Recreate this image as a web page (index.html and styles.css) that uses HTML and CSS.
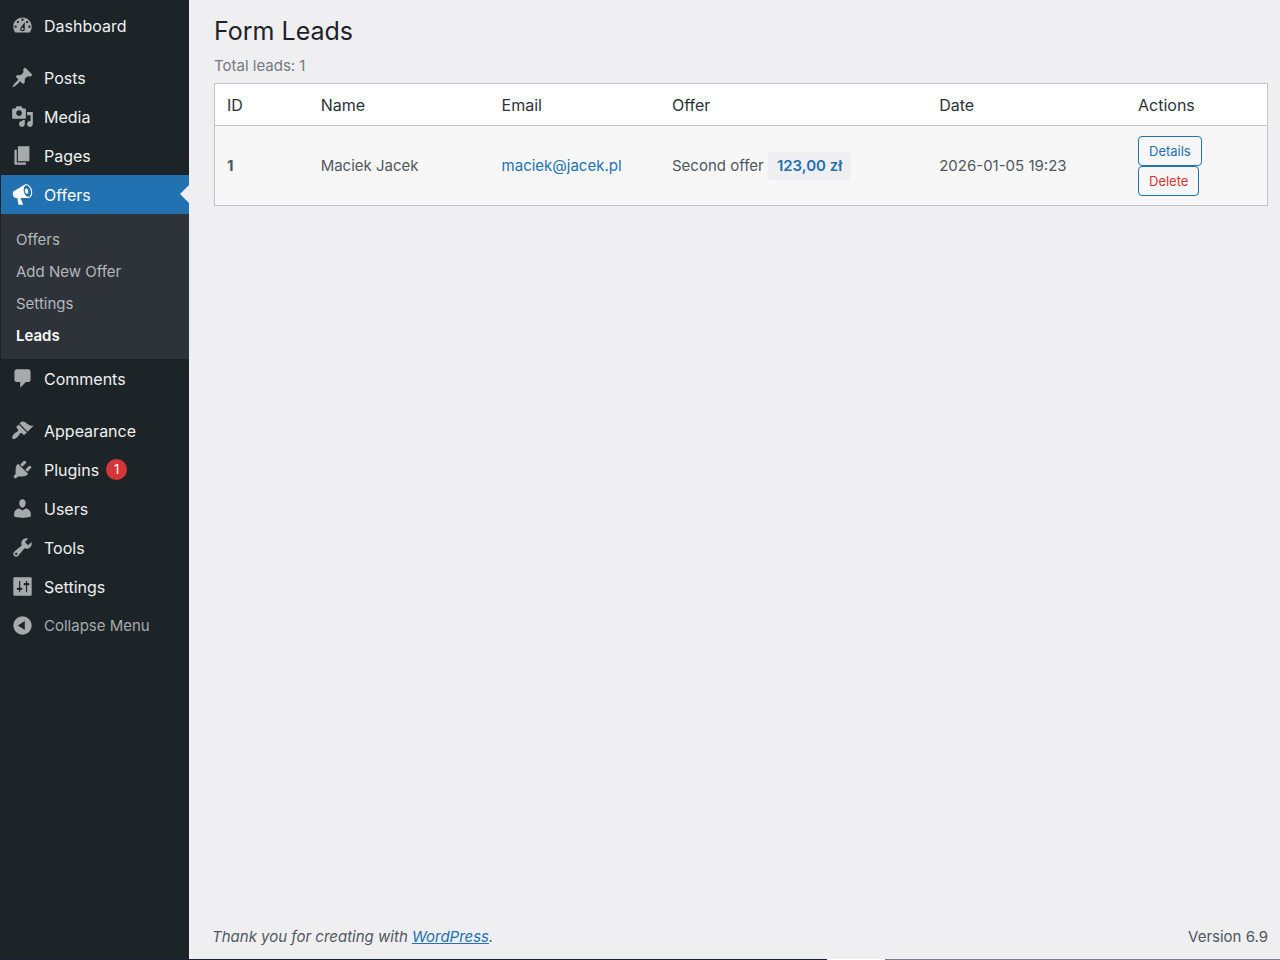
FILE: index.html
```html
<!DOCTYPE html>
<html lang="en">
<head>
    <meta charset="UTF-8">
    <meta name="viewport" content="width=device-width, initial-scale=1.0">
    <title>Form Leads</title>
    <link rel="stylesheet" href="styles.css">
</head>
<body>

    <div class="layout">
        <!-- Admin menu -->
        <nav class="sidebar" aria-label="Main menu">
            <ul class="menu">
                <li><a href="#"><svg class="icon" viewBox="0 0 20 20"><path fill-rule="evenodd" d="M3.76 16h12.48c1.1-1.37 1.76-3.11 1.76-5 0-4.42-3.58-8-8-8s-8 3.58-8 8c0 1.89.66 3.63 1.76 5zM10 4c.55 0 1 .45 1 1s-.45 1-1 1-1-.45-1-1 .45-1 1-1zM6 6c.55 0 1 .45 1 1s-.45 1-1 1-1-.45-1-1 .45-1 1-1zm8 0c.55 0 1 .45 1 1s-.45 1-1 1-1-.45-1-1 .45-1 1-1zm-5.37 5.55L12 7v6c0 1.1-.9 2-2 2s-2-.9-2-2c0-.57.24-1.08.63-1.45zM4 10c.55 0 1 .45 1 1s-.45 1-1 1-1-.45-1-1 .45-1 1-1zm12 0c.55 0 1 .45 1 1s-.45 1-1 1-1-.45-1-1 .45-1 1-1zm-5 3c0-.55-.45-1-1-1s-1 .45-1 1 .45 1 1 1 1-.45 1-1z"/></svg>Dashboard</a></li>
                <li class="group"><a href="#"><svg class="icon" viewBox="0 0 20 20"><path d="M10.44 3.02l1.82-1.82 6.36 6.35-1.83 1.82c-1.05-.68-2.48-.57-3.41.36l-.75.75c-.92.93-1.04 2.35-.35 3.41l-1.83 1.82-2.41-2.41-2.8 2.79c-.42.42-3.38 2.71-3.8 2.29s1.86-3.39 2.28-3.81l2.79-2.79L4.1 9.36l1.83-1.82c1.05.69 2.48.57 3.4-.36l.75-.75c.93-.92 1.05-2.35.36-3.41z"/></svg>Posts</a></li>
                <li><a href="#"><svg class="icon" viewBox="0 0 20 20"><path fill-rule="evenodd" d="M13 11V4c0-.55-.45-1-1-1h-1.67L9 1H5L3.67 3H2c-.55 0-1 .45-1 1v7c0 .55.45 1 1 1h10c.55 0 1-.45 1-1zM7 4.5c1.38 0 2.5 1.12 2.5 2.5S8.38 9.5 7 9.5 4.5 8.38 4.5 7 5.62 4.5 7 4.5zM14 6h5v10.5c0 1.38-1.12 2.5-2.5 2.5S14 17.88 14 16.5s1.12-2.5 2.5-2.5c.17 0 .34.02.5.05V9h-3V6zm-4 8.05V13h2v3.5c0 1.38-1.12 2.5-2.5 2.5S7 17.88 7 16.5 8.12 14 9.5 14c.17 0 .34.02.5.05z"/></svg>Media</a></li>
                <li><a href="#"><svg class="icon" viewBox="0 0 20 20"><path d="M6 15V2h10v13H6zm-1 1h8v2H3V5h2v11z"/></svg>Pages</a></li>
                <li>
                    <a href="#" class="active"><svg class="icon" viewBox="0 0 20 20"><path fill-rule="evenodd" d="M18.15 5.94c.46 1.62.38 3.22-.02 4.48-.42 1.28-1.26 2.18-2.3 2.48-.16.06-.26.06-.4.06-.06.02-.12.02-.18.02-.06.02-.14.02-.22.02h-6.8l2.22 5.5c.02.14-.06.26-.14.34-.08.1-.24.16-.34.16H6.95c-.1 0-.26-.06-.34-.16-.08-.08-.16-.2-.14-.34l-1-5.5H4.25l-.02-.02c-.5.06-1.08-.18-1.54-.62s-.88-1.08-1.06-1.88c-.24-.8-.2-1.56-.02-2.2.18-.62.58-1.08 1.06-1.3l.02-.02 9-5.4c.1-.06.18-.1.24-.16.06-.04.14-.08.24-.12.16-.08.28-.12.5-.18 1.04-.3 2.24.1 3.22.98s1.84 2.24 2.26 3.86zm-2.58 5.98h-.02c.4-.1.74-.34 1.04-.7.58-.7.86-1.76.86-3.04 0-.64-.1-1.3-.28-1.98-.34-1.36-1.02-2.5-1.78-3.24s-1.68-1.1-2.46-.88c-.82.22-1.4.96-1.7 2-.32 1.04-.28 2.36.06 3.72.38 1.36 1 2.5 1.8 3.24.78.74 1.62 1.1 2.48.88zm-2.54-7.08c.22-.04.42-.02.62.04.38.16.76.48 1.02 1s.42 1.2.42 1.78c0 .3-.04.56-.12.8-.18.48-.44.84-.86.94-.34.1-.8-.06-1.14-.4s-.64-.86-.78-1.5c-.18-.62-.12-1.24.02-1.72s.48-.84.82-.94z"/></svg>Offers</a>
                    <ul class="submenu">
                        <li><a href="#">Offers</a></li>
                        <li><a href="#">Add New Offer</a></li>
                        <li><a href="#">Settings</a></li>
                        <li><a href="#" class="current">Leads</a></li>
                    </ul>
                </li>
                <li><a href="#"><svg class="icon" viewBox="0 0 20 20"><path d="M5 2h10c1.1 0 2 .9 2 2v7c0 1.100-.9 2-2 2h-2l-5 5v-5H5c-1.100 0-2-.9-2-2V4c0-1.100.9-2 2-2z"/></svg>Comments</a></li>
                <li class="group"><a href="#"><svg class="icon" viewBox="0 0 20 20"><path d="M14.48 11.06L7.41 3.99l1.5-1.5c.5-.56 2.3-.47 3.51.32 1.21.8 1.43 1.28 2.91 2.1 1.18.64 2.45 1.26 4.45.85zm-.71.71L6.7 4.7 4.93 6.47c-.39.39-.39 1.02 0 1.41l1.06 1.06c.39.39.39 1.03 0 1.42-.6.6-1.43 1.11-2.21 1.69-.35.26-.7.53-1.01.84C1.43 14.23.4 16.08 1.4 17.07c.99 1 2.84-.03 4.18-1.36.31-.31.58-.66.85-1.02.57-.78 1.08-1.61 1.69-2.21.39-.39 1.02-.39 1.41 0l1.06 1.06c.39.39 1.02.39 1.41 0z"/></svg>Appearance</a></li>
                <li><a href="#"><svg class="icon" viewBox="0 0 20 20"><path d="M13.11 4.36L9.87 7.6 8 5.73l3.24-3.24c.35-.34 1.05-.2 1.56.32.52.51.66 1.21.31 1.55zm-8 1.77l.91-1.12 9.01 9.01-1.19.84c-.71.71-2.63 1.16-3.82 1.16H6.14L4.9 17.26c-.59.59-1.54.59-2.12 0-.59-.58-.59-1.53 0-2.12l1.24-1.24v-3.88c0-1.13.4-3.19 1.09-3.89zm7.26 3.97l3.24-3.24c.34-.35 1.04-.21 1.55.31.52.51.66 1.21.31 1.55l-3.24 3.25z"/></svg>Plugins <span class="count">1</span></a></li>
                <li><a href="#"><svg class="icon" viewBox="0 0 20 20"><path d="M10 9.25c-2.27 0-2.73-3.44-2.73-3.44C7 4.02 7.82 2 9.97 2c2.16 0 2.98 2.02 2.71 3.81 0 0-.41 3.44-2.68 3.44zm0 2.57L12.72 10c2.39 0 4.52 2.33 4.52 4.53v2.49s-3.65 1.13-7.24 1.13c-3.65 0-7.24-1.13-7.24-1.13v-2.49c0-2.25 1.94-4.48 4.47-4.48z"/></svg>Users</a></li>
                <li><a href="#"><svg class="icon" viewBox="0 0 20 20"><path fill-rule="evenodd" d="M16.68 9.77c-1.34 1.34-3.3 1.67-4.95.99l-5.41 6.52c-.99.99-2.59.99-3.58 0s-.99-2.59 0-3.57l6.52-5.42c-.68-1.65-.35-3.61.99-4.95 1.28-1.28 3.12-1.62 4.72-1.06l-2.89 2.89 2.82 2.82 2.86-2.87c.53 1.58.18 3.39-1.08 4.65zM3.81 16.21c.4.39 1.04.39 1.43 0 .4-.4.4-1.04 0-1.43-.39-.4-1.03-.4-1.43 0-.39.39-.39 1.03 0 1.43z"/></svg>Tools</a></li>
                <li><a href="#"><svg class="icon" viewBox="0 0 20 20"><path fill-rule="evenodd" d="M18 17V3c0-.55-.45-1-1-1H3c-.55 0-1 .45-1 1v14c0 .55.45 1 1 1h14c.55 0 1-.45 1-1zM8 11h1c.55 0 1 .45 1 1s-.45 1-1 1H8v1.5c0 .28-.22.5-.5.5s-.5-.22-.5-.5V13H6c-.55 0-1-.45-1-1s.45-1 1-1h1V5.500c0-.28.22-.5.5-.5s.5.22.5.5V11zm5-2h-1c-.55 0-1-.45-1-1s.45-1 1-1h1V5.500c0-.28.22-.5.5-.5s.5.22.5.5V7h1c.55 0 1 .45 1 1s-.45 1-1 1h-1v5.500c0 .28-.22.5-.5.5s-.5-.22-.5-.5V9z"/></svg>Settings</a></li>
            </ul>
            <button type="button" class="collapse"><svg class="icon" viewBox="0 0 20 20"><path fill-rule="evenodd" d="M10 2a8 8 0 1 1 0 16 8 8 0 0 1 0-16zm2 4l-6 4 6 4z"/></svg>Collapse Menu</button>
        </nav>

        <!-- Content -->
        <div class="content">
            <main>
                <h1>Form Leads</h1>
                <p class="total">Total leads: 1</p>
                <table class="leads">
                    <colgroup>
                        <col class="col-id">
                        <col class="col-name">
                        <col class="col-email">
                        <col class="col-offer">
                        <col class="col-date">
                        <col class="col-actions">
                    </colgroup>
                    <thead>
                        <tr>
                            <th>ID</th>
                            <th>Name</th>
                            <th>Email</th>
                            <th>Offer</th>
                            <th>Date</th>
                            <th>Actions</th>
                        </tr>
                    </thead>
                    <tbody>
                        <tr>
                            <td><strong>1</strong></td>
                            <td>Maciek Jacek</td>
                            <td><a href="mailto:maciek@jacek.pl">maciek@jacek.pl</a></td>
                            <td>Second offer <span class="price">123,00 zł</span></td>
                            <td>2026-01-05 19:23</td>
                            <td>
                                <div class="actions">
                                    <button type="button" class="button">Details</button>
                                    <button type="button" class="button delete">Delete</button>
                                </div>
                            </td>
                        </tr>
                    </tbody>
                </table>
            </main>
            <footer class="footer">
                <em>Thank you for creating with <a href="#">WordPress</a>.</em>
                <span>Version 6.9</span>
            </footer>
        </div>
    </div>
    <div class="bottom-line"></div>

</body>
</html>
```
FILE: styles.css
```css
* {
    box-sizing: border-box;
}

body {
    margin: 0;
    min-height: 100vh;
    display: flex;
    flex-direction: column;
    background: #efeff1;
    color: #50575e;
    font-family: Inter, "Liberation Sans", sans-serif;
    font-size: 15px;
}

a {
    color: #2271b1;
}

ul {
    list-style: none;
    margin: 0;
    padding: 0;
}

.layout {
    flex: 1;
    display: flex;
}

/* Sidebar */
.sidebar {
    flex: none;
    width: 189px;
    padding: 6px 0 0 1px;
    background: #1d2427;
}

.menu a,
.collapse {
    display: flex;
    align-items: center;
    height: 39px;
    padding: 0 10px;
    color: #f0f0f1;
    font-size: 16px;
    text-decoration: none;
}

.menu .group {
    margin-top: 13px;
}

.icon {
    flex: none;
    width: 23px;
    height: 23px;
    margin-right: 10px;
    fill: #a7aaad;
}

.menu .active {
    position: relative;
    background: #2271b1;
    color: #fff;
}

.active .icon {
    fill: #fff;
}

.active::after {
    content: "";
    position: absolute;
    right: 0;
    top: 10px;
    border: 9px solid transparent;
    border-left-width: 0;
    border-right-color: #efeff1;
}

.submenu {
    padding: 9px 0 8px;
    background: #2e3239;
}

.menu .submenu a {
    height: 32px;
    padding: 0 15px;
    color: #b4b8bc;
    font-size: 15px;
}

.menu .submenu .current {
    color: #fff;
    font-weight: 600;
}

.count {
    width: 21px;
    margin-left: 7px;
    border-radius: 50%;
    background: #d63638;
    color: #fff;
    font-size: 13px;
    line-height: 21px;
    text-align: center;
}

.menu + .collapse {
    width: 100%;
    border: 0;
    background: none;
    color: #a7aaad;
    font-family: inherit;
    font-size: 15px;
    cursor: pointer;
}

/* Content */
.content {
    flex: 1;
    display: flex;
    flex-direction: column;
    padding: 14px 12px 12px 23px;
}

main {
    flex: 1;
    padding-left: 2px;
}

h1 {
    margin: 0;
    color: #1d2327;
    font-size: 25px;
    font-weight: 400;
    line-height: 34px;
}

.total {
    margin: 8px 0 7px;
    color: #757a80;
    line-height: 20px;
}

.leads {
    width: 100%;
    table-layout: fixed;
    border: 1px solid #c3c4c7;
    border-spacing: 0;
    background: #fff;
}

.col-id { width: 8.9%; }
.col-name { width: 17.2%; }
.col-email { width: 16.2%; }
.col-offer { width: 25.4%; }
.col-date { width: 18.9%; }
.col-actions { width: 13.4%; }

.leads th {
    padding: 11px 12px 10px;
    border-bottom: 1px solid #c3c4c7;
    color: #2c3338;
    font-size: 16px;
    font-weight: 400;
    line-height: 20px;
    text-align: left;
}

.leads td {
    padding: 10px 12px 9px;
    background: #f7f7f8;
    line-height: 20px;
}

.leads td a {
    text-decoration: none;
}

.price {
    display: inline-block;
    padding: 4px 9px;
    border-radius: 4px;
    background: #efeff1;
    color: #2271b1;
    font-weight: 600;
}

.actions {
    display: flex;
    flex-direction: column;
    align-items: flex-start;
}

.button {
    height: 30px;
    padding: 0 10px;
    border: 1px solid #2271b1;
    border-radius: 4px;
    background: #f7f7f8;
    color: #2271b1;
    font-family: inherit;
    font-size: 13px;
    cursor: pointer;
}

.button.delete {
    color: #d63638;
}

/* Footer */
.footer {
    display: flex;
    justify-content: space-between;
    line-height: 20px;
}

.bottom-line {
    height: 1px;
    background: linear-gradient(to right, #1d2033 827px, #fff 827px, #fff 885px, #7c7d85 885px);
}
```
